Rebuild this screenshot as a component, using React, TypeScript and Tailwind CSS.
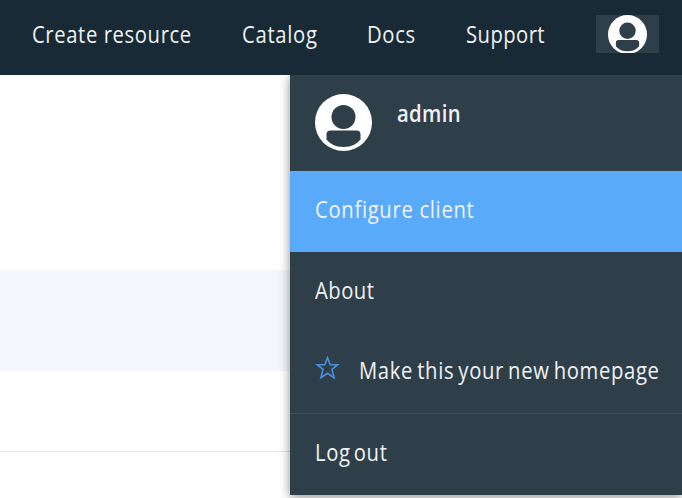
import React from 'react';

function Avatar({ className }: { className: string }) {
  return (
    <svg viewBox="0 0 57 57" className={className} aria-hidden="true">
      <circle cx="28.5" cy="28.5" r="28.5" fill="#fff" />
      <circle cx="28.5" cy="23" r="12" fill="#2e3f49" />
      <path d="M15.5 36.500h26q4 0 4 4v5c-3.500 4.500-9 7.500-17 7.500s-13.500-3-17-7.500v-5q0-4 4-4z" fill="#2e3f49" />
    </svg>
  );
}

function Star() {
  return (
    <svg viewBox="0 0 24 24" className="-mt-1 h-6 w-6 shrink-0" fill="none" stroke="#4a90dc" strokeWidth="1.600" aria-hidden="true">
      <path d="M12.500 1.700l2.700 7h7.600l-5.800 4.700 2.100 8.200-6.600-4.300-6.600 4.300 2.100-8.200-5.800-4.700h7.600z" />
    </svg>
  );
}

function Label({ text, className }: { text: string; className: string }) {
  return <span className={`inline-block origin-left scale-x-[0.88] whitespace-nowrap ${className}`}>{text}</span>;
}

export default function App() {
  return (
    <div className="relative h-[498px] w-[682px] overflow-hidden bg-white font-['Open_Sans',sans-serif] text-[23px] leading-[30px] text-[#f0f2f4]">
      <header className="flex h-[75px] bg-[#182a35] pl-8 pt-[15px]">
        <nav className="flex whitespace-nowrap pt-[4px]">
          <a className="w-[210px]"><Label text="Create resource" className="tracking-[0.69px]" /></a>
          <a className="w-[125px]"><Label text="Catalog" className="tracking-[0.8px]" /></a>
          <a className="w-[99px]"><Label text="Docs" className="tracking-[0.75px]" /></a>
          <a className="w-[130px]"><Label text="Support" className="tracking-[0.5px]" /></a>
        </nav>
        <button className="flex h-[38px] w-[63px] items-center justify-center overflow-hidden bg-[#2e3f49]">
          <Avatar className="h-[39px] w-[39px] shrink-0" />
        </button>
      </header>
      <main>
        <div className="h-[195px]" />
        <div className="h-[101px] bg-[#f4f6fb]" />
        <div className="h-[81px] border-b border-[#dfe3e6]" />
      </main>

      <aside className="absolute left-[290px] top-[75px] flex h-[420px] w-[392px] flex-col whitespace-nowrap bg-[#2e3f49] shadow-[0_2px_10px_rgba(0,0,0,0.45)] [clip-path:inset(0_0_-12px_-20px)]">
        <div className="flex h-24 pl-[25px] pt-[19px]">
          <Avatar className="h-[57px] w-[57px]" />
          <strong className="ml-[25px] pt-[4px] font-semibold"><Label text="admin" className="tracking-[0.4px]" /></strong>
        </div>
        <a className="flex h-[81px] items-center bg-[#5aaafa] pb-[5px] pl-[25px]"><Label text="Configure client" className="tracking-[0.78px]" /></a>
        <a className="flex h-[81px] items-center pb-[5px] pl-[25px]"><Label text="About" className="tracking-[0.55px]" /></a>
        <a className="flex h-[81px] items-center border-b border-[#3d505b] pb-[7px] pl-[25px]">
          <Star /><Label text="Make this your new homepage" className="ml-5 tracking-[0.74px] [word-spacing:-2px]" />
        </a>
        <a className="flex h-[81px] items-center pb-[5px] pl-[25px]"><Label text="Log out" className="tracking-[0.7px] [word-spacing:-3px]" /></a>
      </aside>
    </div>
  );
}
